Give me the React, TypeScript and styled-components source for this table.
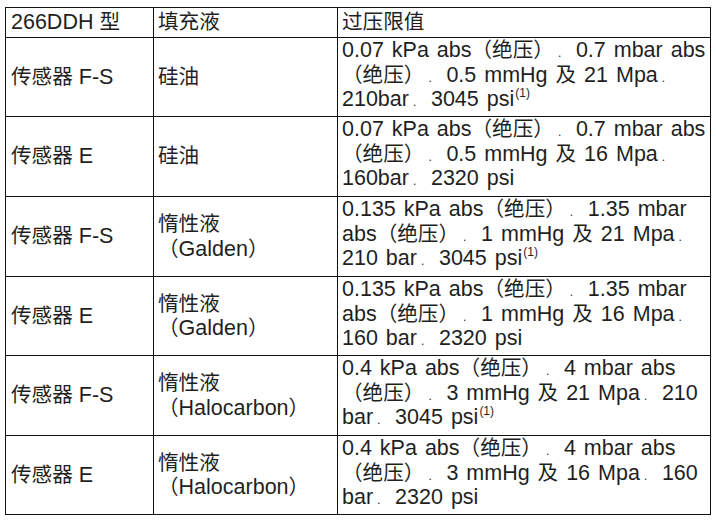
import React from "react";
import styled, { createGlobalStyle } from "styled-components";

const GlobalStyle = createGlobalStyle`
  html, body {
    margin: 0;
    padding: 0;
    background: #ffffff;
  }
  body {
    font-family: "Liberation Sans", "Noto Sans CJK SC", sans-serif;
    color: #1f1f1f;
  }
`;

const Table = styled.div`
  display: grid;
  grid-template-columns: 147px 183px 372px;
  grid-template-rows: 29px 78px 79px 79px 78px 79px 78px;
  gap: 1px;
  width: fit-content;
  background: #111;
  border: 1px solid #111;
  margin: 7px 0 0 5px;
`;

const Cell = styled.div<{ $valign?: "center" | "start"; $pad?: number; $wordGap?: number }>`
  background: #fff;
  display: flex;
  flex-direction: column;
  justify-content: ${(p) => (p.$valign === "start" ? "flex-start" : "center")};
  padding: 0 0 0 ${(p) => p.$pad ?? 4}px;
  font-family: "Liberation Sans", "Noto Sans CJK SC", sans-serif;
  font-size: 21.5px;
  line-height: 24.5px;
  word-spacing: ${(p) => p.$wordGap ?? 0}px;
  color: #1f1f1f;
  overflow: visible;
  min-width: 0;
`;

const HeaderCell = styled(Cell)`
  justify-content: center;
  padding-bottom: 1px;
`;

const Line = styled.span`
  display: block;
  white-space: nowrap;
`;

const Han = styled.span`
  font-size: 20.6px;
`;

const Sep = styled.span`
  display: inline-block;
  width: 22px;
  padding-left: 4px;
  box-sizing: border-box;
  font-size: 12px;
  line-height: 0;
`;

const Sup = styled.sup`
  font-size: 12px;
  line-height: 0;
  vertical-align: 9px;
  margin-left: 1px;
  word-spacing: 0;
`;

type Row = {
  sensor: string;
  fluid: string[];
  lines: string[];
};

const rows: Row[] = [
  {
    sensor: "传感器 F-S",
    fluid: ["硅油"],
    lines: [
      "0.07 kPa abs（绝压）|0.7 mbar abs",
      "（绝压）|0.5 mmHg 及 21 Mpa|",
      "210bar|3045 psi^",
    ],
  },
  {
    sensor: "传感器 E",
    fluid: ["硅油"],
    lines: [
      "0.07 kPa abs（绝压）|0.7 mbar abs",
      "（绝压）|0.5 mmHg 及 16 Mpa|",
      "160bar|2320 psi",
    ],
  },
  {
    sensor: "传感器 F-S",
    fluid: ["惰性液", "（Galden）"],
    lines: [
      "0.135 kPa abs（绝压）|1.35 mbar",
      "abs（绝压）|1 mmHg 及 21 Mpa|",
      "210 bar|3045 psi^",
    ],
  },
  {
    sensor: "传感器 E",
    fluid: ["惰性液", "（Galden）"],
    lines: [
      "0.135 kPa abs（绝压）|1.35 mbar",
      "abs（绝压）|1 mmHg 及 16 Mpa|",
      "160 bar|2320 psi",
    ],
  },
  {
    sensor: "传感器 F-S",
    fluid: ["惰性液", "（Halocarbon）"],
    lines: [
      "0.4 kPa abs（绝压）|4 mbar abs",
      "（绝压）|3 mmHg 及 21 Mpa|210",
      "bar|3045 psi^",
    ],
  },
  {
    sensor: "传感器 E",
    fluid: ["惰性液", "（Halocarbon）"],
    lines: [
      "0.4 kPa abs（绝压）|4 mbar abs",
      "（绝压）|3 mmHg 及 16 Mpa|160",
      "bar|2320 psi",
    ],
  },
];

const hanRe = /([\u3000-\u303f\u4e00-\u9fff\uff00-\uffef]+)/;

function mixed(text: string) {
  return text.split(hanRe).map((seg, i) =>
    seg === "" ? null : hanRe.test(seg) ? <Han key={i}>{seg}</Han> : <React.Fragment key={i}>{seg}</React.Fragment>
  );
}

function renderLine(text: string) {
  const hasSup = text.endsWith("^");
  const body = hasSup ? text.slice(0, -1) : text;
  const parts = body.split("|");
  return (
    <>
      {parts.map((part, i) => (
        <React.Fragment key={i}>
          {mixed(part)}
          {i < parts.length - 1 && <Sep>.</Sep>}
        </React.Fragment>
      ))}
      {hasSup && <Sup>(1)</Sup>}
    </>
  );
}

export default function App() {
  return (
    <>
      <GlobalStyle />
      <Table>
        <HeaderCell $pad={5}>
          <Line>{mixed("266DDH 型")}</Line>
        </HeaderCell>
        <HeaderCell>
          <Line>{mixed("填充液")}</Line>
        </HeaderCell>
        <HeaderCell>
          <Line>{mixed("过压限值")}</Line>
        </HeaderCell>
        {rows.map((row, i) => (
          <React.Fragment key={i}>
            <Cell $pad={5}>
              <Line>{mixed(row.sensor)}</Line>
            </Cell>
            <Cell>
              {row.fluid.map((f, j) => (
                <Line key={j}>{mixed(f)}</Line>
              ))}
            </Cell>
            <Cell $valign="start" $wordGap={2}>
              {row.lines.map((l, j) => (
                <Line key={j}>{renderLine(l)}</Line>
              ))}
            </Cell>
          </React.Fragment>
        ))}
      </Table>
    </>
  );
}
